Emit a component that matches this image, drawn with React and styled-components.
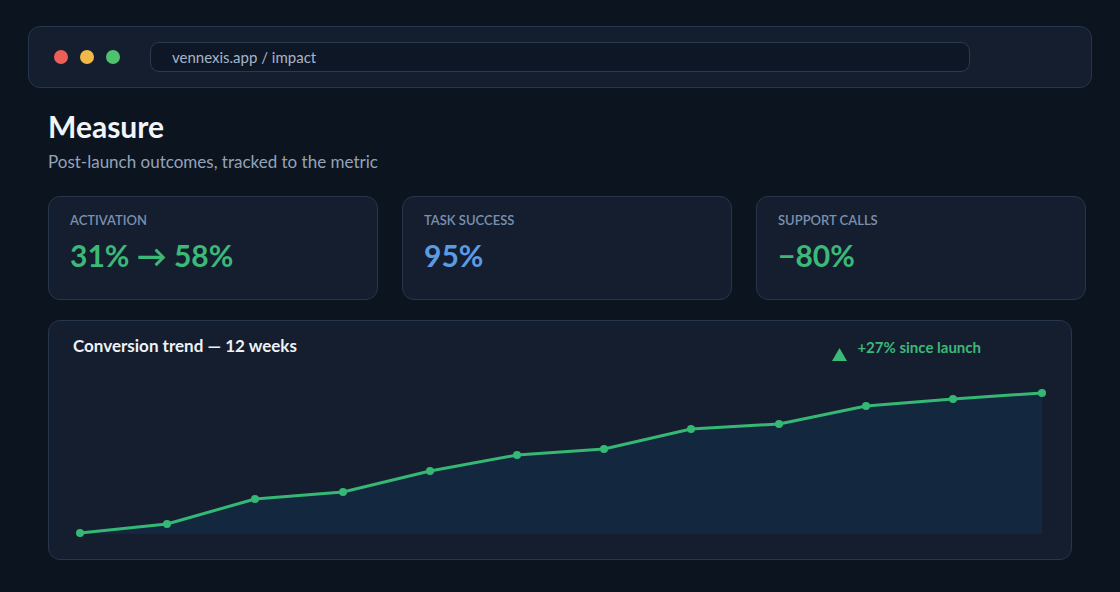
import React from "react";
import styled, { createGlobalStyle } from "styled-components";

const Global = createGlobalStyle`
  html, body { margin: 0; padding: 0; background: #0c1420; }
  body { font-family: Lato, "Noto Sans", sans-serif; color: #e8edf4; }
`

const Page = styled.div`
  width: 1120px; height: 592px; box-sizing: border-box;
  padding: 26px 28px 0 28px;
  background: #0c1420;
`
const Bar = styled.div`
  height: 62px; box-sizing: border-box;
  display: flex; align-items: center;
  padding: 0 0 0 25px;
  background: #141e2e;
  border: 1px solid #26364d;
  border-radius: 12px;
`
const Dots = styled.div`
  display: flex; gap: 12px;
`
const Dot = styled.span`
  width: 14px; height: 14px; border-radius: 50%;
  background: ${p => p.color};
`
const Url = styled.div`
  margin-left: 30px;
  width: 820px; height: 30px; box-sizing: border-box;
  display: flex; align-items: center;
  padding-left: 21px;
  background: #0e1726;
  border: 1px solid #2a3a51;
  border-radius: 9px;
  font-size: 15px; color: #a7b4c7;
`
const Body = styled.div`
  padding: 0 6px 0 20px;
`
const Heading = styled.h1`
  margin: 20px 0 0 0;
  font-size: 30px; font-weight: 700; line-height: 1.2;
  color: #f1f5f9;
`
const Sub = styled.p`
  margin: 8px 0 0 0;
  font-size: 17px; line-height: 1.2;
  color: #94a3b8;
`
const Cards = styled.div`
  margin-top: 24px;
  display: grid; grid-template-columns: repeat(3, 330px); gap: 24px;
`
const Card = styled.div`
  height: 104px; box-sizing: border-box;
  padding: 16px 21px;
  background: #141e2e;
  border: 1px solid #26364d;
  border-radius: 12px;
`
const Label = styled.div`
  font-size: 13px; line-height: 1.2; font-weight: 600;
  color: #7b90b0;
`
const Value = styled.div`
  margin-top: 8px;
  font-size: 30px; line-height: 1.2; font-weight: 700;
  color: ${p => p.color};
`
const Panel = styled.div`
  margin-top: 20px;
  width: 1024px; height: 240px; box-sizing: border-box;
  padding: 15px 24px 20px 24px;
  background: #141e2e;
  border: 1px solid #26364d;
  border-radius: 12px;
`
const PanelHead = styled.div`
  height: 22px;
  display: flex; justify-content: space-between; align-items: flex-start;
  padding-right: 66px;
`
const PanelTitle = styled.div`
  font-size: 17px; line-height: 1.2; font-weight: 700;
  color: #eef2f7;
`
const Badge = styled.div`
  display: flex; align-items: flex-start; gap: 10px;
  margin-top: 2px;
  font-size: 15px; line-height: 1.2; font-weight: 700;
  color: #3cb878;
`
const Tri = styled.svg`
  margin-top: 10px;
`
const Chart = styled.svg`
  display: block; margin-top: 13px;
`

const pts = [[7,162],[94,153],[182,128],[270,121],[357,100],[444,84],[531,78],[618,58],[706,53],[793,35],[880,28],[969,22]]

const App = () => {
  const line = pts.map(p => p.join(",")).join(" ")
  const area = `M7,163 L${pts.map(p => p.join(",")).join(" L")} L969,163 Z`
  return (
    <Page>
      <Global/>
      <Bar>
        <Dots>
          <Dot color="#ec5f59"/>
          <Dot color="#f2b948"/>
          <Dot color="#4fc26f"/>
        </Dots>
        <Url>vennexis.app / impact</Url>
      </Bar>
      <Body>
        <Heading>Measure</Heading>
        <Sub>Post-launch outcomes, tracked to the metric</Sub>
        <Cards>
          <Card>
            <Label>ACTIVATION</Label>
            <Value color="#3cb878">31% → 58%</Value>
          </Card>
          <Card>
            <Label>TASK SUCCESS</Label>
            <Value color="#5b9be3">95%</Value>
          </Card>
          <Card>
            <Label>SUPPORT CALLS</Label>
            <Value color="#3cb878">−80%</Value>
          </Card>
        </Cards>
        <Panel>
          <PanelHead>
            <PanelTitle>Conversion trend — 12 weeks</PanelTitle>
            <Badge>
              <Tri width="15" height="13" viewBox="0 0 15 13"><path d="M7.5 0 L15 13 L0 13 Z" fill="#3cb878"/></Tri>
              +27% since launch
            </Badge>
          </PanelHead>
          <Chart width="976" height="170" viewBox="0 0 976 170">
            <path d={area} fill="#13273f"/>
            <polyline points={line} fill="none" stroke="#34b874" strokeWidth="3" strokeLinejoin="round"/>
            {pts.map((p, i) => <circle key={i} cx={p[0]} cy={p[1]} r="4" fill="#34b874"/>)}
          </Chart>
        </Panel>
      </Body>
    </Page>
  )
}

export default App
